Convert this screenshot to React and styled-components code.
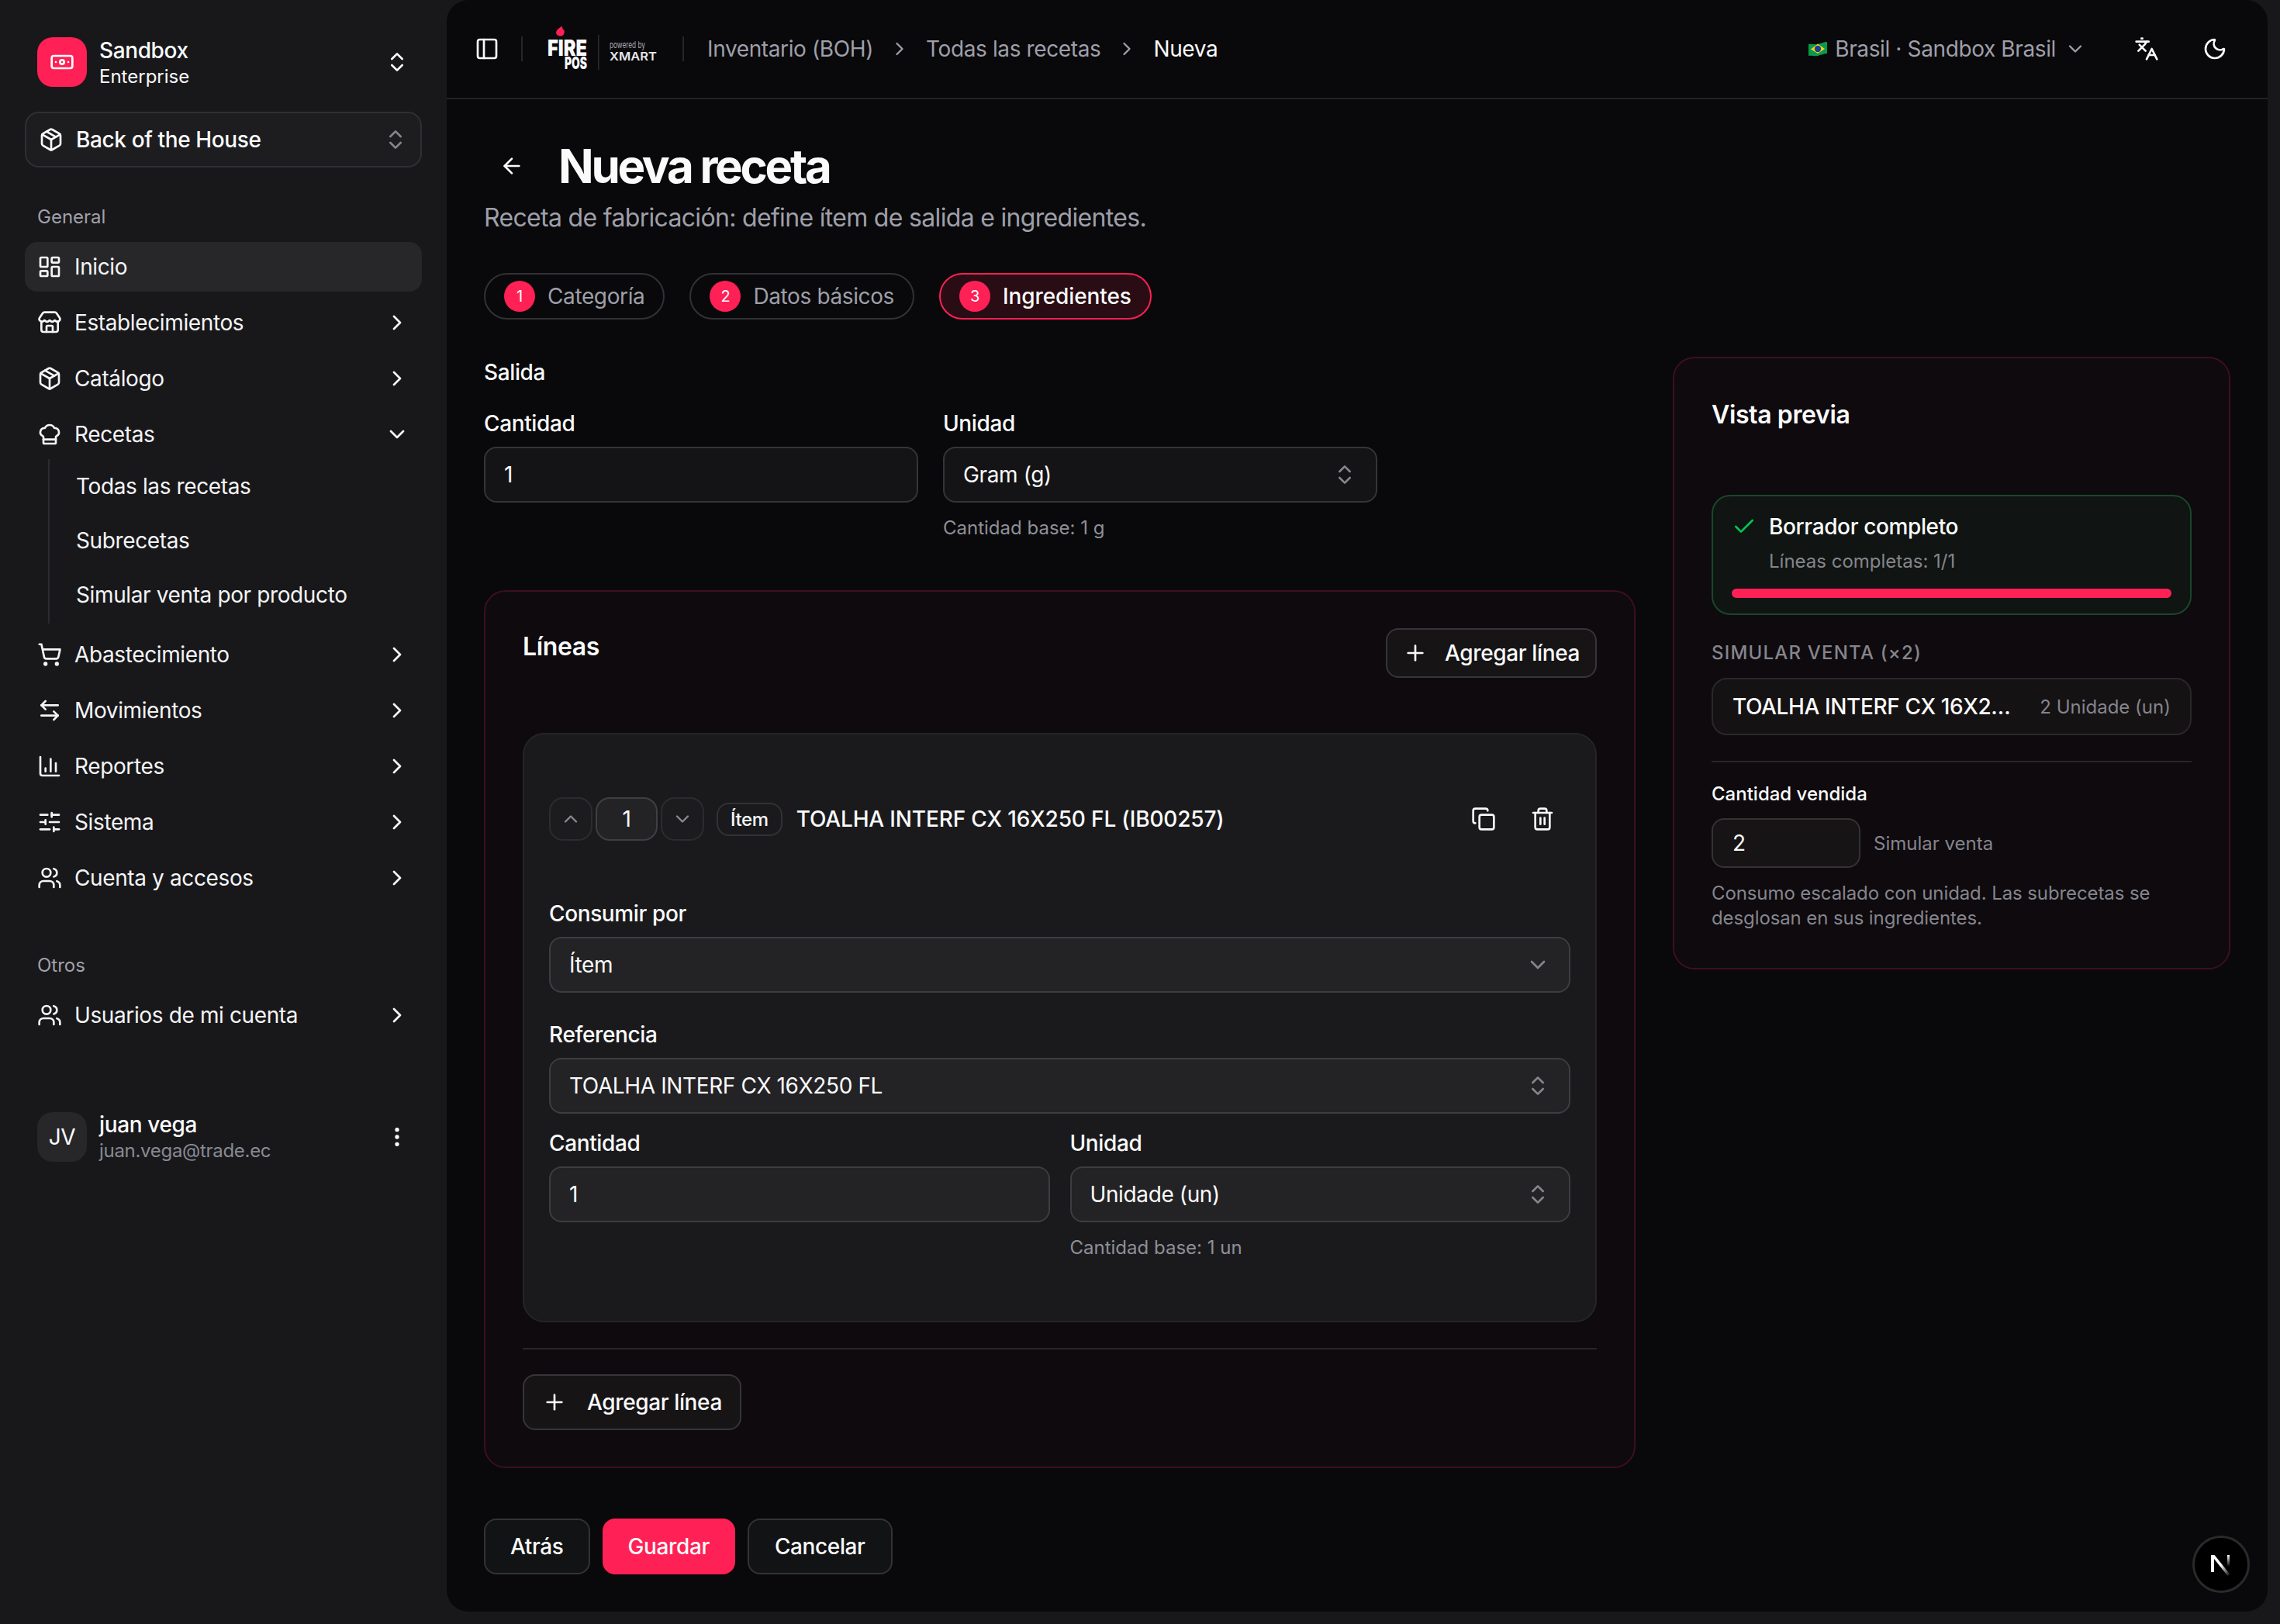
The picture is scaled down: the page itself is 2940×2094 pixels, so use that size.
import React from "react";
import styled, { createGlobalStyle } from "styled-components";
import {
  ArrowLeft, ArrowLeftRight, Banknote, ChartColumn, Check, ChefHat, ChevronDown, ChevronRight,
  ChevronsUpDown, ChevronUp, Copy, EllipsisVertical, Languages, LayoutDashboard, Moon, Package,
  PanelLeft, Plus, ShoppingCart, SlidersHorizontal, Store, Trash2, Users,
} from "lucide-react";

const Global = createGlobalStyle`
  html, body { margin: 0; padding: 0; background: #18181b; }
  body { font-family: Inter, "Noto Sans", sans-serif; font-size: 28px; letter-spacing: -0.38px; color: #fafafa; -webkit-font-smoothing: antialiased; }
  * { box-sizing: border-box; }
  svg { flex: none; display: block; }
`;

const Shell = styled.div`
  position: relative;
  display: flex;
  width: 2940px;
  height: 2094px;
  padding: 0 16px 16px 0;
  overflow: hidden;
  background: #18181b;
`;

/* ---------- sidebar ---------- */
const Sidebar = styled.aside`
  width: 576px;
  flex: none;
  padding: 48px 32px 0;
  display: flex;
  flex-direction: column;
`;
const Brand = styled.div`
  display: flex;
  align-items: center;
  gap: 16px;
  padding: 0 16px;
  height: 64px;
`;
const BrandTile = styled.div`
  width: 64px;
  height: 64px;
  border-radius: 20px;
  background: #ff2056;
  display: flex;
  align-items: center;
  justify-content: center;
`;
const BrandText = styled.div`
  flex: 1;
  display: flex;
  flex-direction: column;
  margin-top: 2px;
`;
const BrandName = styled.span`
  font-size: 28px;
  line-height: 36px;
  font-weight: 500;
`;
const BrandPlan = styled.span`
  font-size: 24px;
  line-height: 32px;
  letter-spacing: 0;
`;
const ModuleSelect = styled.div`
  margin-top: 32px;
  height: 72px;
  border: 2px solid #2f2f33;
  border-radius: 18px;
  background: #1d1d20;
  display: flex;
  align-items: center;
  gap: 16px;
  padding: 0 16px;
  font-weight: 500;
  & > span { flex: 1; }
  & > svg:last-child { color: #85858c; }
`;
const GroupLabel = styled.div`
  font-size: 24px;
  line-height: 32px;
  letter-spacing: 0;
  color: #a1a1aa;
  padding: 0 16px;
  margin-top: ${(p) => p.$top}px;
  margin-bottom: 16px;
`;
const NavList = styled.div`
  display: flex;
  flex-direction: column;
  gap: 8px;
`;
const NavRow = styled.div`
  height: 64px;
  display: flex;
  align-items: center;
  gap: 16px;
  padding: 0 16px;
  border-radius: 16px;
  background: ${(p) => (p.$active ? "#27272a" : "transparent")};
  color: #f4f4f5;
  & > span { flex: 1; }
`;
const SubList = styled.div`
  margin: -8px 0 0 30px;
  border-left: 2px solid #2c2c30;
  padding-left: 34px;
  display: flex;
  flex-direction: column;
  height: 212px;
`;
const SubItem = styled.div`
  height: 70px;
  display: flex;
  align-items: center;
  color: #f4f4f5;
`;
const Profile = styled.div`
  margin-top: 90px;
  display: flex;
  align-items: center;
  gap: 16px;
  padding: 0 16px;
`;
const Avatar = styled.div`
  width: 64px;
  height: 64px;
  border-radius: 20px;
  background: #27272a;
  display: flex;
  align-items: center;
  justify-content: center;
`;
const ProfileText = styled.div`
  flex: 1;
  display: flex;
  flex-direction: column;
  margin-top: 2px;
`;
const ProfileName = styled.span`
  font-size: 28px;
  line-height: 34px;
  font-weight: 500;
`;
const ProfileMail = styled.span`
  font-size: 24px;
  line-height: 34px;
  letter-spacing: -0.3px;
  color: #8a8a92;
`;

/* ---------- main ---------- */
const Main = styled.main`
  flex: 1;
  background: #09090b;
  border-radius: 28px;
  display: flex;
  flex-direction: column;
  min-width: 0;
`;
const TopBar = styled.header`
  height: 128px;
  flex: none;
  border-bottom: 2px solid #232326;
  display: flex;
  align-items: center;
  gap: 28px;
  padding: 0 52px 0 36px;
`;
const BarRule = styled.div`
  width: 2px;
  height: 32px;
  background: #27272a;
`;
const Crumbs = styled.nav`
  margin-left: 2px;
  display: flex;
  align-items: center;
  gap: 20px;
  color: #9f9fa9;
  flex: 1;
`;
const CrumbNow = styled.span`
  color: #fafafa;
`;
const Country = styled.div`
  display: flex;
  align-items: center;
  gap: 9px;
  color: #9f9fa9;
  margin-right: 34px;
  & > svg:last-child { margin-left: 2px; }
`;
const TopIcons = styled.div`
  display: flex;
  gap: 56px;
`;
const Content = styled.div`
  flex: 1;
  padding: 50px 48px 0;
`;
const TitleRow = styled.div`
  display: flex;
  align-items: center;
  gap: 44px;
  padding-left: 20px;
`;
const Title = styled.h1`
  margin: 0;
  font-size: 60px;
  line-height: 72px;
  font-weight: 700;
  letter-spacing: -0.055em;
`;
const Subtitle = styled.p`
  margin: 7px 0 0;
  font-size: 32px;
  line-height: 48px;
  letter-spacing: -0.68px;
  color: #9f9fa9;
`;
const Steps = styled.div`
  margin-top: 47px;
  display: flex;
  gap: 32px;
`;
const Step = styled.div`
  height: 60px;
  display: flex;
  align-items: center;
  gap: 16px;
  padding: 0 24px;
  border-radius: 30px;
  border: 2px solid ${(p) => (p.$active ? "#ff2056" : "#323236")};
  background: ${(p) => (p.$active ? "#2a0c14" : "transparent")};
  color: ${(p) => (p.$active ? "#fafafa" : "#9f9fa9")};
  font-weight: ${(p) => (p.$active ? 500 : 400)};
  letter-spacing: ${(p) => (p.$active ? "-0.1px" : "-0.38px")};
`;
const StepDot = styled.span`
  width: 40px;
  height: 40px;
  border-radius: 50%;
  background: #ff2056;
  color: #fff;
  font-size: 20px;
  font-weight: 400;
  display: flex;
  align-items: center;
  justify-content: center;
`;
const Columns = styled.div`
  margin-top: 48px;
  display: grid;
  grid-template-columns: 1485px 719px;
  gap: 48px;
  align-items: start;
`;
const SectionLabel = styled.div`
  font-weight: 500;
  line-height: 40px;
`;
const Pair = styled.div`
  display: grid;
  grid-template-columns: 1fr 1fr;
  gap: ${(p) => p.$gap || 32}px;
  margin-top: ${(p) => p.$top || 0}px;
  width: ${(p) => (p.$wide ? "100%" : "1152px")};
`;
const Field = styled.div`
  margin-top: ${(p) => p.$top || 0}px;
`;
const Label = styled.div`
  font-weight: 500;
  line-height: 40px;
  margin-bottom: 10px;
`;
const Control = styled.div`
  height: 72px;
  border-radius: 16px;
  border: 2px solid ${(p) => (p.$raised ? "#3d3d41" : "#353539")};
  background: ${(p) => (p.$raised ? "#232326" : "#141416")};
  display: flex;
  align-items: center;
  justify-content: space-between;
  padding: 0 24px;
  color: #fafafa;
  & > svg { color: #85858c; }
`;
const Hint = styled.div`
  margin-top: 17px;
  font-size: 24px;
  line-height: 32px;
  letter-spacing: 0;
  color: #8f8f97;
`;
const RoseCard = styled.section`
  border: 2px solid #3f0f1e;
  background: #0e0a0e;
  border-radius: 28px;
`;
const LinesCard = styled(RoseCard)`
  margin-top: 64px;
  height: 1132px;
  padding: 47px 48px 0;
`;
const LinesHead = styled.div`
  display: flex;
  justify-content: space-between;
  align-items: flex-start;
`;
const CardTitle = styled.h2`
  margin: 0;
  font-size: 32px;
  line-height: 48px;
  font-weight: 600;
`;
const Outline = styled.button`
  height: ${(p) => p.$h}px;
  display: inline-flex;
  align-items: center;
  gap: ${(p) => p.$gap}px;
  padding: 0 ${(p) => p.$pad}px;
  border-radius: 16px;
  border: 2px solid #37343a;
  background: #171416;
  color: #fafafa;
  font: 500 28px Inter, sans-serif;
  letter-spacing: -0.38px;
`;
const LineItem = styled.div`
  margin-top: 71px;
  height: 760px;
  background: #1a1a1d;
  border: 2px solid #252528;
  border-radius: 28px;
  padding: 81px 32px 0;
`;
const LineRow = styled.div`
  display: flex;
  align-items: center;
  height: 56px;
`;
const StepBtn = styled.div`
  width: 56px;
  height: 56px;
  border-radius: 18px;
  border: 2px solid #2c2c30;
  background: #1c1c1f;
  color: #8a8a90;
  display: flex;
  align-items: center;
  justify-content: center;
`;
const StepValue = styled.div`
  width: 80px;
  height: 56px;
  margin: 0 4px;
  border-radius: 18px;
  border: 2px solid #3f3f43;
  background: #232326;
  display: flex;
  align-items: center;
  justify-content: center;
`;
const KindBadge = styled.div`
  margin: 0 18px 0 16px;
  height: 43px;
  padding: 0 16px;
  border-radius: 16px;
  border: 2px solid #323236;
  font-size: 24px;
  font-weight: 500;
  display: flex;
  align-items: center;
`;
const LineName = styled.div`
  flex: 1;
  font-weight: 500;
  letter-spacing: -0.16px;
`;
const LineActions = styled.div`
  display: flex;
  gap: 44px;
  padding-right: 20px;
`;
const Rule = styled.div`
  height: 2px;
  background: #27272a;
  margin-top: ${(p) => p.$top}px;
`;
const Footer = styled.div`
  margin-top: 65px;
  display: flex;
  gap: 16px;
`;
const FootBtn = styled.button`
  height: 72px;
  padding: 0 ${(p) => p.$pad}px;
  border-radius: 16px;
  border: 2px solid ${(p) => (p.$primary ? "#ff2056" : "#333336")};
  background: ${(p) => (p.$primary ? "#ff2056" : "#121315")};
  color: #fafafa;
  font: 500 28px Inter, sans-serif;
  letter-spacing: -0.38px;
`;
const PreviewCard = styled(RoseCard)`
  height: 790px;
  padding: 49px 48px 0;
`;
const StatusBox = styled.div`
  margin-top: 79px;
  height: 155px;
  border: 2px solid #17482b;
  background: #101412;
  border-radius: 24px;
  padding: 19px 24px 0;
`;
const StatusHead = styled.div`
  display: flex;
  align-items: center;
  gap: 16px;
  font-weight: 500;
  line-height: 40px;
  color: #fafafa;
  & > svg { color: #00c950; }
`;
const StatusNote = styled.div`
  margin: 9px 0 0 48px;
  font-size: 24px;
  line-height: 32px;
  letter-spacing: 0;
  color: #85858c;
`;
const Progress = styled.div`
  margin-top: 19px;
  height: 12px;
  border-radius: 6px;
  background: #ff2056;
`;
const Overline = styled.div`
  margin-top: 33px;
  font-size: 24px;
  line-height: 32px;
  font-weight: 500;
  letter-spacing: 0.05em;
  color: #85858c;
  text-transform: uppercase;
`;
const SimRow = styled.div`
  margin-top: 16px;
  height: 74px;
  border-radius: 20px;
  border: 2px solid #2a272a;
  background: #151214;
  display: flex;
  align-items: center;
  gap: 30px;
  padding: 0 25px;
`;
const SimName = styled.span`
  flex: 1;
  min-width: 0;
  font-weight: 500;
  white-space: nowrap;
  overflow: hidden;
  text-overflow: ellipsis;
`;
const SimQty = styled.span`
  flex: none;
  font-size: 24px;
  letter-spacing: 0;
  color: #85858c;
`;
const SmallLabel = styled.div`
  margin-top: 25px;
  font-size: 24px;
  line-height: 32px;
  letter-spacing: 0;
  font-weight: 500;
`;
const SimControls = styled.div`
  margin-top: 15px;
  display: flex;
  align-items: center;
  gap: 17px;
  font-size: 24px;
  letter-spacing: 0;
  color: #85858c;
`;
const SimInput = styled.div`
  width: 192px;
  height: 64px;
  border-radius: 16px;
  border: 2px solid #353236;
  background: #171416;
  color: #fafafa;
  font-size: 28px;
  display: flex;
  align-items: center;
  padding: 0 25px;
`;
const Note = styled.p`
  margin: 17px 0 0;
  font-size: 24px;
  line-height: 32px;
  letter-spacing: -0.1px;
  color: #85858c;
`;
const DevBadge = styled.div`
  position: absolute;
  left: 2827px;
  top: 1980px;
  width: 74px;
  height: 74px;
  border-radius: 50%;
  background: #000;
  border: 3px solid #2a2a2c;
  display: flex;
  align-items: center;
  justify-content: center;
`;

const nav1 = [
  { label: "Inicio", Icon: LayoutDashboard, active: true, plain: true },
  { label: "Establecimientos", Icon: Store },
  { label: "Catálogo", Icon: Package },
];
const nav2 = [
  { label: "Abastecimiento", Icon: ShoppingCart },
  { label: "Movimientos", Icon: ArrowLeftRight },
  { label: "Reportes", Icon: ChartColumn },
  { label: "Sistema", Icon: SlidersHorizontal },
  { label: "Cuenta y accesos", Icon: Users },
];

function Row({ item }) {
  const { Icon, label, active, plain } = item;
  return (
    <NavRow $active={active}>
      <Icon size={32} />
      <span>{label}</span>
      {!plain && <ChevronRight size={32} />}
    </NavRow>
  );
}

const Flag = () => (
  <svg width="26" height="22" viewBox="0 0 26 22">
    <path d="M1 5c4-1 8 1 12 0s8-3 12-3v15c-4 0-8 2-12 3s-8-1-12 0z" fill="#0a9a4b" />
    <path d="M13 4.5 22 11 13 17 4 11.5z" fill="#f6d21f" />
    <circle cx="13" cy="11" r="4.2" fill="#1d3f8f" />
  </svg>
);

const Logo = () => (
  <svg width="150" height="64" viewBox="0 0 150 64" fontFamily="Inter, sans-serif" letterSpacing="0">
    <path d="M21 15.500c-4 0-6.500-2.500-5.800-5.500.6-2.800 3.800-5 8-7.500-.5 2.200 0 3.300 1.200 4.500 1.500 1.500 1.800 3.500 1 5-.8 2-2.200 3.500-4.400 3.500z" fill="#ff2056" />
    <text x="4" y="41" fontSize="29" fontWeight="900" fill="#fafafa" textLength="51" lengthAdjust="spacingAndGlyphs">FIRE</text>
    <text x="26" y="58" fontSize="21" fontWeight="900" fill="#fafafa" textLength="29" lengthAdjust="spacingAndGlyphs">POS</text>
    <rect x="69" y="14" width="1.500" height="45" fill="#2c2c2f" />
    <text x="84" y="31" fontSize="12" fill="#a8a8ae" textLength="46" lengthAdjust="spacingAndGlyphs">powered by</text>
    <text x="84" y="47" fontSize="15" fontWeight="600" fill="#e8e8ea" textLength="61" lengthAdjust="spacingAndGlyphs">XMART</text>
  </svg>
);

export default function App() {
  return (
    <Shell>
      <Global />
      <Sidebar>
        <Brand>
          <BrandTile><Banknote size={32} color="#fff" /></BrandTile>
          <BrandText>
            <BrandName>Sandbox</BrandName>
            <BrandPlan>Enterprise</BrandPlan>
          </BrandText>
          <ChevronsUpDown size={32} />
        </Brand>
        <ModuleSelect>
          <Package size={32} />
          <span>Back of the House</span>
          <ChevronsUpDown size={32} />
        </ModuleSelect>
        <GroupLabel $top={48}>General</GroupLabel>
        <NavList>
          {nav1.map((n) => <Row key={n.label} item={n} />)}
          <NavRow>
            <ChefHat size={32} />
            <span>Recetas</span>
            <ChevronDown size={32} />
          </NavRow>
          <SubList>
            <SubItem>Todas las recetas</SubItem>
            <SubItem>Subrecetas</SubItem>
            <SubItem>Simular venta por producto</SubItem>
          </SubList>
          {nav2.map((n) => <Row key={n.label} item={n} />)}
        </NavList>
        <GroupLabel $top={65}>Otros</GroupLabel>
        <NavList>
          <Row item={{ label: "Usuarios de mi cuenta", Icon: Users }} />
        </NavList>
        <Profile>
          <Avatar>JV</Avatar>
          <ProfileText>
            <ProfileName>juan vega</ProfileName>
            <ProfileMail>juan.vega@trade.ec</ProfileMail>
          </ProfileText>
          <EllipsisVertical size={32} />
        </Profile>
      </Sidebar>

      <Main>
        <TopBar>
          <PanelLeft size={32} />
          <BarRule />
          <Logo />
          <BarRule />
          <Crumbs>
            <span>Inventario (BOH)</span>
            <ChevronRight size={28} />
            <span>Todas las recetas</span>
            <ChevronRight size={28} />
            <CrumbNow>Nueva</CrumbNow>
          </Crumbs>
          <Country>
            <Flag />
            <span>Brasil · Sandbox Brasil</span>
            <ChevronDown size={28} />
          </Country>
          <TopIcons>
            <Languages size={32} />
            <Moon size={32} />
          </TopIcons>
        </TopBar>

        <Content>
          <TitleRow>
            <ArrowLeft size={32} />
            <Title>Nueva receta</Title>
          </TitleRow>
          <Subtitle>Receta de fabricación: define ítem de salida e ingredientes.</Subtitle>
          <Steps>
            <Step><StepDot>1</StepDot>Categoría</Step>
            <Step><StepDot>2</StepDot>Datos básicos</Step>
            <Step $active><StepDot>3</StepDot>Ingredientes</Step>
          </Steps>

          <Columns>
            <div>
              <SectionLabel>Salida</SectionLabel>
              <Pair $top={26}>
                <Field>
                  <Label>Cantidad</Label>
                  <Control>1</Control>
                </Field>
                <Field>
                  <Label>Unidad</Label>
                  <Control>Gram (g)<ChevronsUpDown size={32} /></Control>
                  <Hint>Cantidad base: 1 g</Hint>
                </Field>
              </Pair>

              <LinesCard>
                <LinesHead>
                  <CardTitle>Líneas</CardTitle>
                  <Outline $h={64} $pad={20} $gap={22}><Plus size={32} />Agregar línea</Outline>
                </LinesHead>
                <LineItem>
                  <LineRow>
                    <StepBtn><ChevronUp size={28} /></StepBtn>
                    <StepValue>1</StepValue>
                    <StepBtn><ChevronDown size={28} /></StepBtn>
                    <KindBadge>Ítem</KindBadge>
                    <LineName>TOALHA INTERF CX 16X250 FL (IB00257)</LineName>
                    <LineActions>
                      <Copy size={32} />
                      <Trash2 size={32} />
                    </LineActions>
                  </LineRow>
                  <Field $top={74}>
                    <Label>Consumir por</Label>
                    <Control $raised>Ítem<ChevronDown size={32} /></Control>
                  </Field>
                  <Field $top={34}>
                    <Label>Referencia</Label>
                    <Control $raised>TOALHA INTERF CX 16X250 FL<ChevronsUpDown size={32} /></Control>
                  </Field>
                  <Pair $top={18} $gap={26} $wide>
                    <Field>
                      <Label>Cantidad</Label>
                      <Control $raised>1</Control>
                    </Field>
                    <Field>
                      <Label>Unidad</Label>
                      <Control $raised>Unidade (un)<ChevronsUpDown size={32} /></Control>
                      <Hint>Cantidad base: 1 un</Hint>
                    </Field>
                  </Pair>
                </LineItem>
                <Rule $top={33} />
                <Field $top={32}>
                  <Outline $h={72} $pad={23} $gap={26}><Plus size={32} />Agregar línea</Outline>
                </Field>
              </LinesCard>

              <Footer>
                <FootBtn $pad={32}>Atrás</FootBtn>
                <FootBtn $primary $pad={31}>Guardar</FootBtn>
                <FootBtn $pad={33}>Cancelar</FootBtn>
              </Footer>
            </div>

            <PreviewCard>
              <CardTitle>Vista previa</CardTitle>
              <StatusBox>
                <StatusHead><Check size={32} />Borrador completo</StatusHead>
                <StatusNote>Líneas completas: 1/1</StatusNote>
                <Progress />
              </StatusBox>
              <Overline>Simular venta (×2)</Overline>
              <SimRow>
                <SimName>TOALHA INTERF CX 16X250 FL</SimName>
                <SimQty>2 Unidade (un)</SimQty>
              </SimRow>
              <Rule $top={33} />
              <SmallLabel>Cantidad vendida</SmallLabel>
              <SimControls>
                <SimInput>2</SimInput>
                Simular venta
              </SimControls>
              <Note>Consumo escalado con unidad. Las subrecetas se desglosan en sus ingredientes.</Note>
            </PreviewCard>
          </Columns>
        </Content>
      </Main>

      <DevBadge>
        <svg width="34" height="34" viewBox="0 0 34 34">
          <defs>
            <linearGradient id="nDiag" x1="0" y1="0" x2="1" y2="1">
              <stop offset="0.5" stopColor="#fff" />
              <stop offset="1" stopColor="#fff" stopOpacity="0" />
            </linearGradient>
            <linearGradient id="nRight" x1="0" y1="0" x2="0" y2="1">
              <stop offset="0" stopColor="#fff" />
              <stop offset="1" stopColor="#fff" stopOpacity="0" />
            </linearGradient>
          </defs>
          <rect x="4" y="5" width="4" height="22" fill="#fff" />
          <path d="M4 5h4.500l20 25-3 2z" fill="url(#nDiag)" />
          <rect x="25" y="5" width="3" height="15" fill="url(#nRight)" />
        </svg>
      </DevBadge>
    </Shell>
  );
}
